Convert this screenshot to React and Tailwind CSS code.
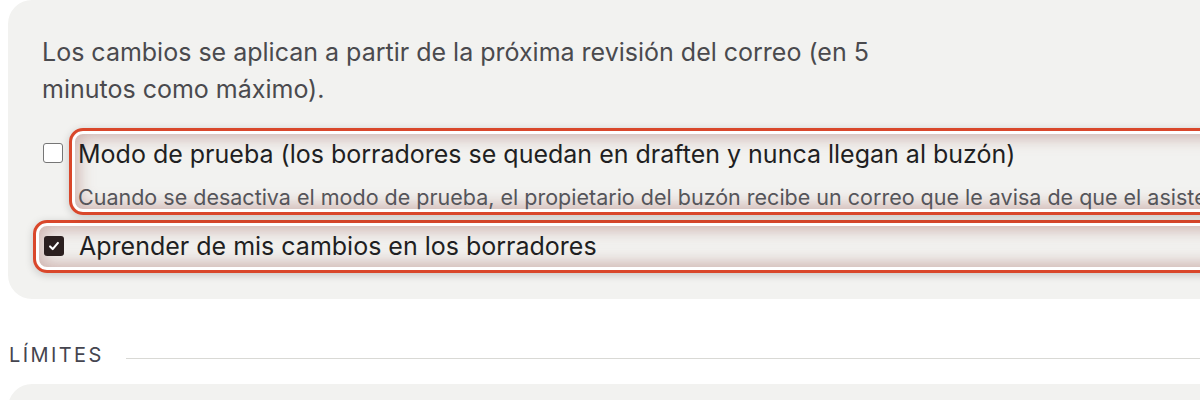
import React from 'react'

const hl =
  'border-[3px] border-[#d9472b] shadow-[inset_0_0_0_3px_#ffffff,inset_0_0_16px_7px_rgba(150,80,70,0.38),0_2px_8px_rgba(0,0,0,0.18)]'

const Box = ({ checked }) => (
  <span
    className={
      checked
        ? 'flex h-5 w-5 shrink-0 items-center justify-center rounded-[3px] bg-[#2b2020]'
        : 'block h-5 w-5 shrink-0 rounded-[3px] border border-[#767676] bg-white'
    }
  >
    {checked && (
      <svg viewBox="0 0 16 16" className="h-[14px] w-[14px]">
        <path
          d="M3.5 8.5l3 3 6-7"
          fill="none"
          stroke="#fff"
          strokeWidth="2.4"
          strokeLinecap="round"
          strokeLinejoin="round"
        />
      </svg>
    )}
  </span>
)

export default function App() {
  return (
    <div className="h-[400px] w-[1200px] overflow-hidden bg-white font-['Inter',sans-serif]">
      <div className="ml-2 w-[1260px] rounded-[24px] bg-[#f2f2f0] pb-[26px] pl-[34px] pt-[34px]">
        <p className="max-w-[860px] text-[25px] leading-[37px] text-[#4a4a4e]">
          Los cambios se aplican a partir de la próxima revisión del correo (en 5 minutos
          como máximo).
        </p>

        {/* test mode */}
        <div className="mt-[20px] flex items-start">
          <span className="ml-px mr-[6px] mt-[15px]">
            <Box />
          </span>
          <div className={`flex-1 rounded-[14px] pb-[2px] pl-[6px] pt-[8px] ${hl}`}>
            <div className="whitespace-nowrap text-[25px] leading-[30px] text-[#1f1f22]">
              Modo de prueba (los borradores se quedan en draften y nunca llegan al buzón)
            </div>
            <div className="mt-[15px] whitespace-nowrap text-[21.5px] leading-[26px] text-[#55555a]">
              Cuando se desactiva el modo de prueba, el propietario del buzón recibe un correo
              que le avisa de que el asistente está activo.
            </div>
          </div>
        </div>

        {/* learn from edits */}
        <div
          className={`-ml-[9px] mt-[5px] flex items-center gap-[15px] rounded-[14px] pb-[9px] pl-[8px] pt-[8px] ${hl}`}
        >
          <Box checked />
          <span className="whitespace-nowrap text-[25px] leading-[30px] text-[#1f1f22]">
            Aprender de mis cambios en los borradores
          </span>
        </div>
      </div>

      <div className="mt-[42px] flex items-center gap-[22px] pl-[9px]">
        <span className="text-[20px] leading-[28px] tracking-[0.12em] text-[#45454f]">
          LÍMITES
        </span>
        <div className="mt-[6px] h-px flex-1 bg-[#d9d9d5]" />
      </div>

      <div className="ml-2 mt-[15px] h-[60px] w-[1260px] rounded-[24px] bg-[#f2f2f0]" />
    </div>
  )
}
